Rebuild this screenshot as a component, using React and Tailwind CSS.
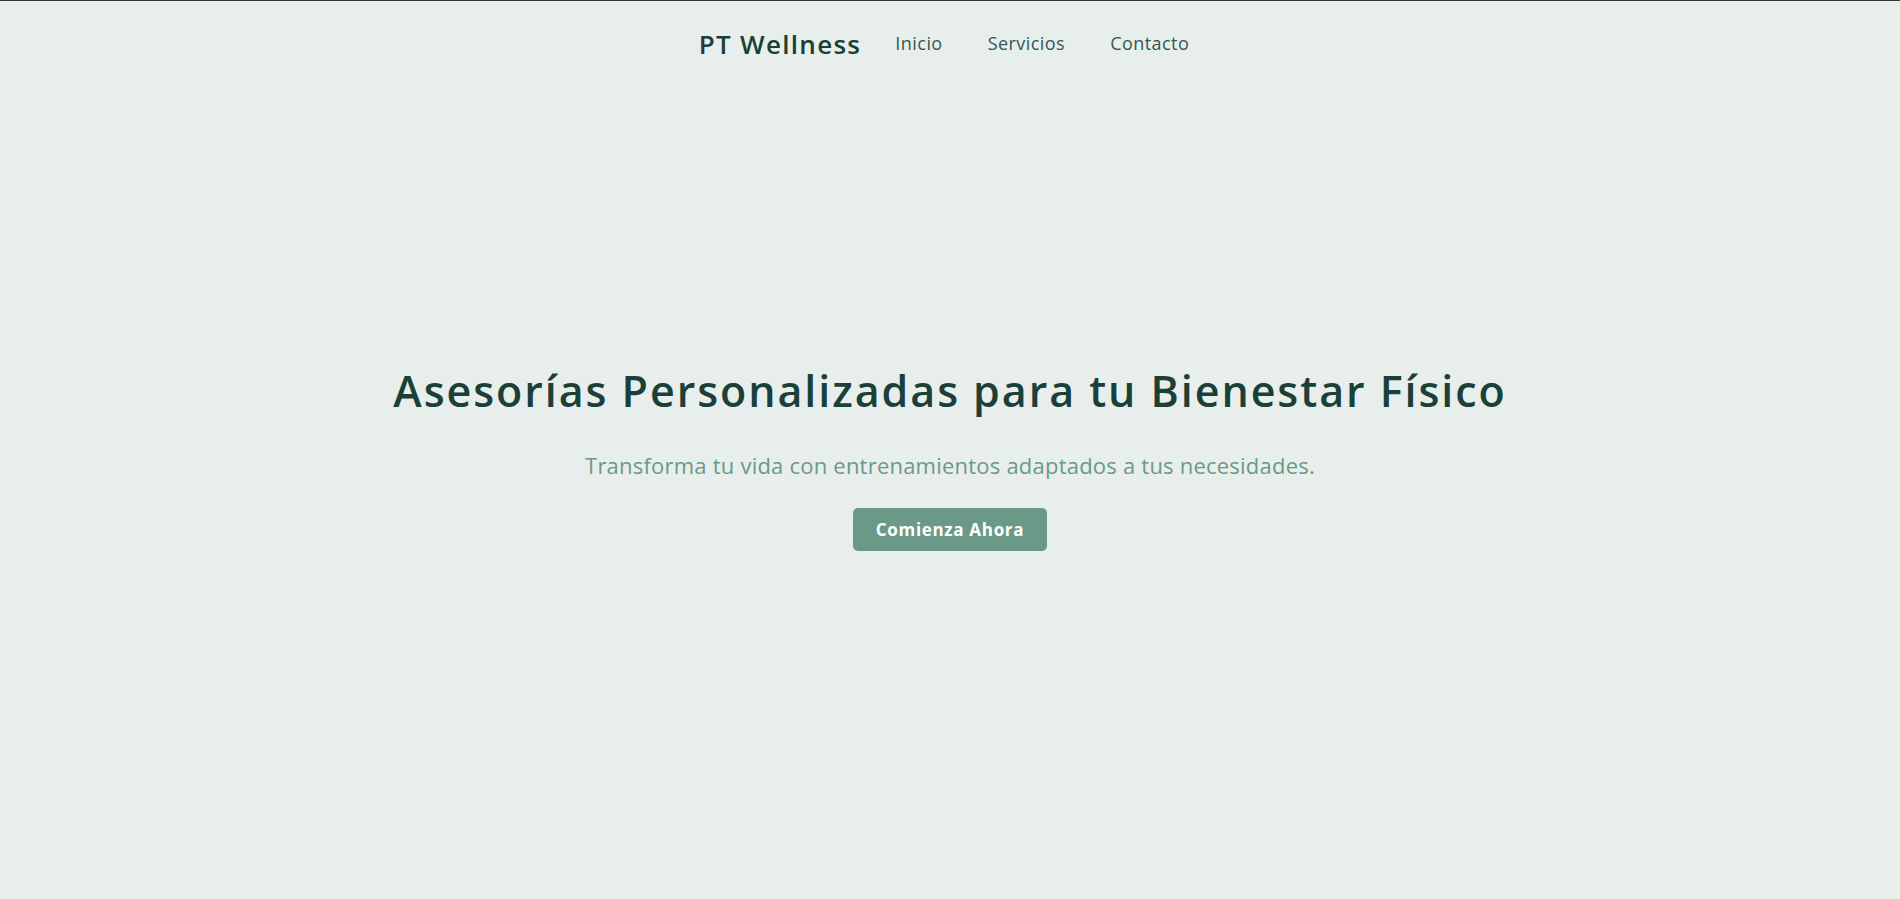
import React from 'react';

const links = ['Inicio', 'Servicios', 'Contacto'];

export default function App() {
  return (
    <div className="min-h-screen bg-[#e8eeeb] border-t border-[#333333] font-['Open_Sans',sans-serif]">
      <nav className="flex justify-center items-center h-[86px] pr-[12px]">
        <a href="#" className="text-[26px] font-semibold tracking-[0.05em] text-[#1a4037] leading-none">PT Wellness</a>
        <ul className="flex items-center gap-[45px] ml-[34px]">
          {links.map((l) => (
            <li key={l}>
              <a href="#" className="text-[18px] tracking-[0.025em] text-[#2f5a50] leading-none">{l}</a>
            </li>
          ))}
        </ul>
      </nav>

      <section className="flex flex-col items-center text-center pt-[278px]">
        <h1 className="text-[43px] font-semibold tracking-[0.045em] text-[#1a4037] leading-[1.2]">
          Asesorías Personalizadas para tu Bienestar Físico
        </h1>
        <p className="mt-[34px] text-[22px] tracking-[0.01em] text-[#6a9a87] leading-[1.3]">
          Transforma tu vida con entrenamientos adaptados a tus necesidades.
        </p>
        <button className="mt-[29px] h-[43px] px-[23px] rounded-[5px] bg-[#6a9a87] text-white text-[17px] font-bold tracking-[0.04em]">
          Comienza Ahora
        </button>
      </section>
    </div>
  );
}
